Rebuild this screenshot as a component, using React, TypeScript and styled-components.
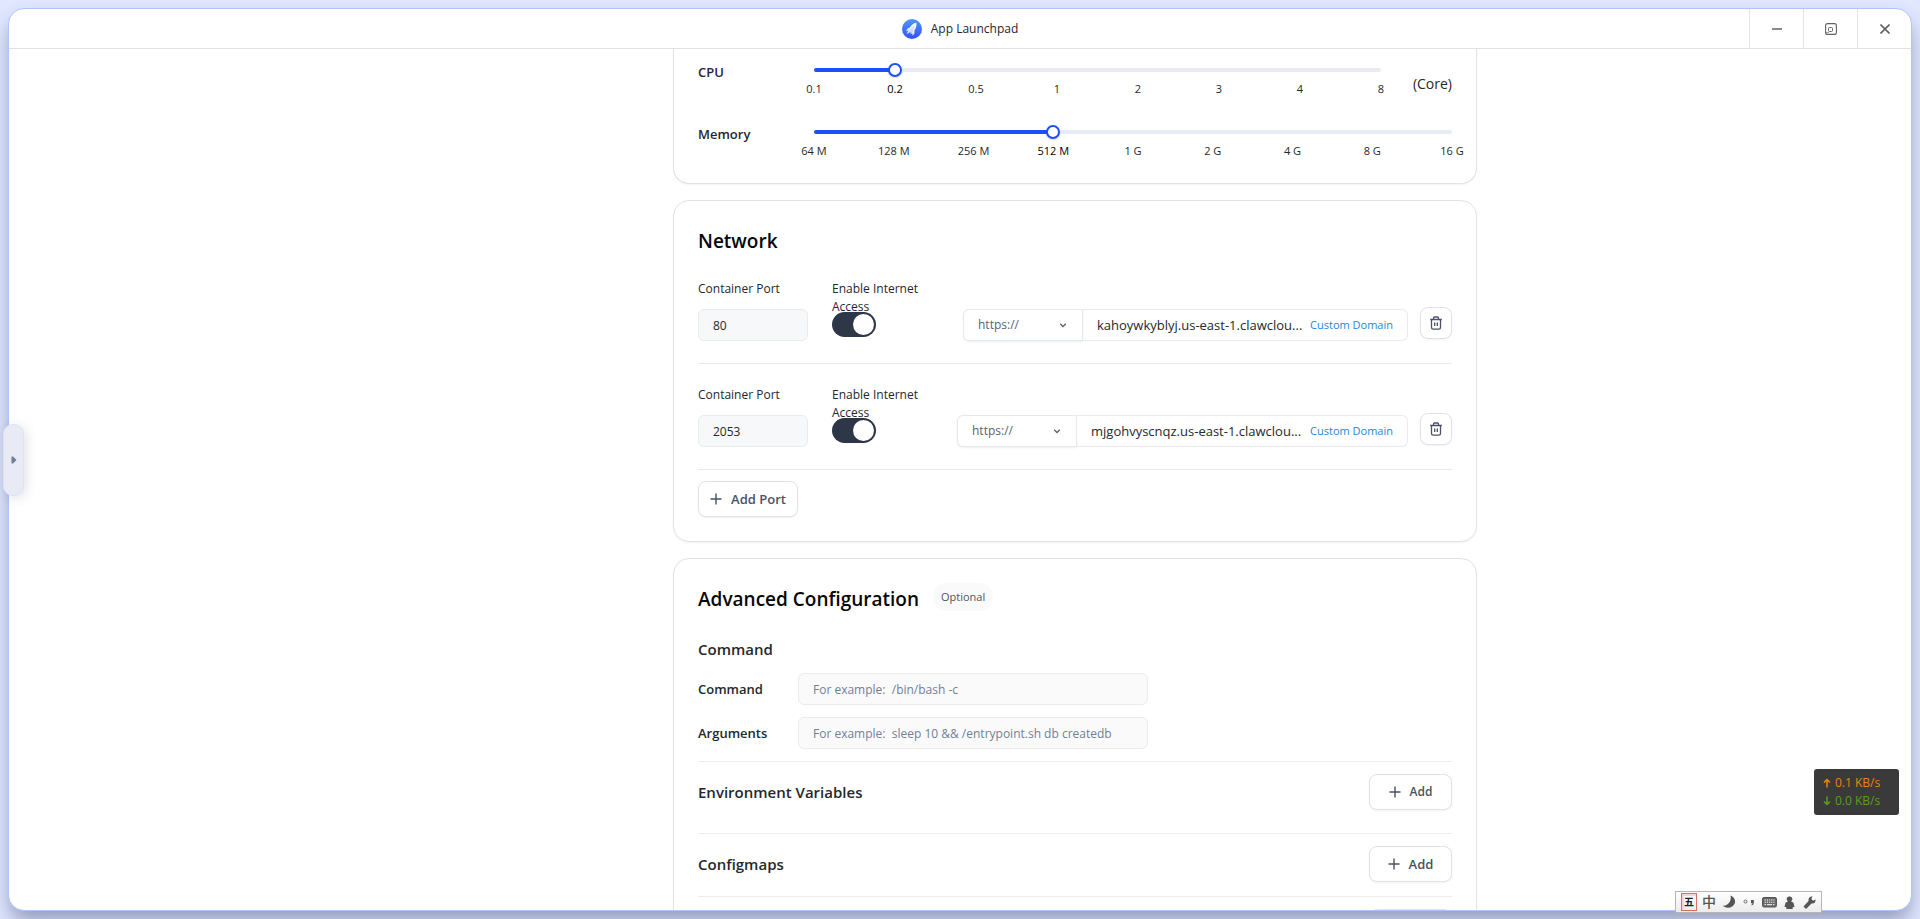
import React, { useState } from "react";
import styled, { createGlobalStyle } from "styled-components";

const GlobalStyle = createGlobalStyle`
  *, *::before, *::after { box-sizing: border-box; }
  body {
    margin: 0;
    background: #e0e7ff;
    color: #24282c;
    font-family: "Open Sans", "Noto Sans", "Noto Sans CJK SC", sans-serif;
    font-size: 14px;
    line-height: 20px;
    overflow: hidden;
  }
  button, input, select { font: inherit; color: inherit; margin: 0; }
  h1, h2, h3, p { margin: 0; font-weight: 600; }
`;

const Desktop = styled.div`
  display: flex;
  height: 100vh;
  padding: 8px;
`;

const AppWindow = styled.section`
  flex: 1;
  min-width: 0;
  display: flex;
  flex-direction: column;
  overflow: hidden;
  background: #fff;
  border: 1px solid #a9c6ff;
  border-radius: 16px;
  box-shadow: 0 12px 20px -2px rgba(50, 65, 105, 0.45);
`;

const TitleBar = styled.header`
  flex: none;
  display: grid;
  grid-template-columns: 1fr auto 1fr;
  height: 40px;
  border-bottom: 1px solid #dfe1e3;
`;

const AppName = styled.h1`
  grid-column: 2;
  display: flex;
  align-items: center;
  gap: 9px;
  font-size: 12px;
  font-weight: 400;
`;

const WindowControls = styled.div`
  display: flex;
  justify-content: flex-end;
`;

const WindowButton = styled.button`
  display: flex;
  align-items: center;
  justify-content: center;
  width: 54px;
  padding: 0;
  border: 0;
  border-left: 1px solid #e2e4e6;
  background: none;
  color: #5f6266;
`;

const Page = styled.main`
  flex: 1;
  min-height: 0;
  overflow: hidden;
  padding-left: 230px;
`;

const Column = styled.div`
  display: flex;
  flex-direction: column;
  gap: 16px;
  max-width: 804px;
  margin: 0 auto;
`;

const Card = styled.section<{ $continued?: boolean }>`
  padding: ${(p) => (p.$continued ? "10px 24px 0" : "24px")};
  border: 1px solid #e1e2e4;
  border-top-width: ${(p) => (p.$continued ? 0 : 1)}px;
  border-radius: ${(p) => (p.$continued ? "0 0 16px 16px" : "16px")};
  box-shadow: 0 1px 2px rgba(19, 51, 107, 0.06);
`;

const SliderRow = styled.div`
  display: flex;
  height: 62px;
`;

const SliderLabel = styled.label`
  width: 116px;
  padding-top: 3px;
  font-size: 13px;
  font-weight: 600;
`;

const SliderBody = styled.div`
  flex: 1;
  padding-top: 9px;
`;

const Track = styled.div`
  position: relative;
  height: 4px;
  border-radius: 2px;
  background: #e8ebf3;
`;

const TrackFill = styled.div`
  height: 4px;
  border-radius: 2px;
  background: #1d4ff7;
`;

const Range = styled.input`
  position: absolute;
  top: -5px;
  left: -7px;
  width: calc(100% + 14px);
  height: 14px;
  appearance: none;
  background: transparent;
  &::-webkit-slider-thumb {
    appearance: none;
    width: 14px;
    height: 14px;
    border: 2px solid #1d4ff7;
    border-radius: 50%;
    background: #fff;
    box-shadow: 0 1px 2px rgba(0, 0, 0, 0.15);
  }
`;

const Ticks = styled.div`
  display: flex;
  justify-content: space-between;
  margin-top: 8px;
`;

const Tick = styled.span<{ $active: boolean }>`
  display: flex;
  justify-content: center;
  width: 0;
  white-space: nowrap;
  font-size: 11px;
  line-height: 18px;
  color: ${(p) => (p.$active ? "#000" : "#24282c")};
`;

const Unit = styled.span`
  width: 71px;
  padding-top: 15px;
  text-align: right;
`;

const CardHeading = styled.div`
  display: flex;
  align-items: flex-start;
  gap: 14px;
  h2 {
    font-size: 19px;
    line-height: 33px;
    color: #060708;
  }
`;

const Badge = styled.span`
  padding: 0 8px;
  border-radius: 14px;
  background: #fafafa;
  color: #52565b;
  font-size: 11px;
  line-height: 28px;
`;

const PortRow = styled.div`
  display: flex;
  align-items: flex-start;
  padding: 22px 0;
  border-bottom: 1px solid #e8e9ea;
`;

const PortField = styled.div`
  width: 110px;
  margin-right: 24px;
`;

const FieldLabel = styled.label`
  display: block;
  height: 18px;
  font-size: 12px;
  line-height: 18px;
`;

const AccessField = styled.div`
  width: 94px;
`;

const PortInput = styled.input`
  display: block;
  width: 100%;
  height: 32px;
  margin-top: 11px;
  padding: 0 14px;
  border: 1px solid #e8ebf0;
  border-radius: 6px;
  background: #f7f8fa;
  font-size: 12px;
`;

const Switch = styled.input`
  appearance: none;
  display: block;
  width: 44px;
  height: 25px;
  margin-top: 14px;
  padding: 2px;
  border-radius: 13px;
  background: #2d3748;
  &::before {
    content: "";
    display: block;
    width: 21px;
    height: 21px;
    border-radius: 50%;
    background: #fff;
  }
  &:checked::before { margin-left: auto; }
`;

const Address = styled.div<{ $width: number }>`
  display: flex;
  width: ${(p) => p.$width}px;
  height: 32px;
  margin: 29px 12px 0 auto;
`;

const SchemeBox = styled.div`
  position: relative;
  width: 120px;
  color: #5a6376;
  svg {
    position: absolute;
    top: 10px;
    right: 14px;
    pointer-events: none;
  }
`;

const Scheme = styled.select`
  appearance: none;
  width: 100%;
  height: 32px;
  padding: 0 14px;
  border: 1px solid #e5e8ee;
  border-radius: 6px 0 0 6px;
  background: #fff;
  box-shadow: 0 1px 2px rgba(19, 51, 107, 0.08);
  font-size: 12px;
`;

const Domain = styled.div`
  flex: 1;
  display: flex;
  align-items: center;
  justify-content: space-between;
  padding: 0 14px;
  border: 1px solid #e8ebf0;
  border-left: 0;
  border-radius: 0 6px 6px 0;
  white-space: nowrap;
  font-size: 13px;
`;

const DomainLink = styled.a`
  color: #1a86e0;
  font-size: 11px;
  text-decoration: none;
`;

const IconButton = styled.button`
  display: flex;
  align-items: center;
  justify-content: center;
  width: 32px;
  height: 32px;
  margin-top: 27px;
  padding: 0;
  border: 1px solid #dfe2ea;
  border-radius: 8px;
  background: #fff;
  box-shadow: 0 1px 2px rgba(19, 51, 107, 0.06);
  color: #485264;
`;

const AddButton = styled.button<{ $width: number; $small?: boolean }>`
  display: flex;
  align-items: center;
  justify-content: center;
  gap: 9px;
  width: ${(p) => p.$width}px;
  height: 36px;
  padding: 0;
  border: 1px solid #dfe2ea;
  border-radius: 8px;
  background: #fff;
  box-shadow: 0 1px 2px rgba(19, 51, 107, 0.06);
  color: #485264;
  font-size: ${(p) => (p.$small ? 12 : 13)}px;
  font-weight: 600;
`;

const PortFooter = styled.div`
  padding-top: 11px;
`;

const SectionTitle = styled.h3`
  font-size: 15px;
  line-height: 24px;
`;

const CommandForm = styled.div`
  display: flex;
  flex-direction: column;
  gap: 12px;
  padding: 21px 0 12px;
  border-bottom: 1px solid #ecedee;
`;

const CommandRow = styled.div`
  display: flex;
  align-items: center;
  label {
    width: 100px;
    font-size: 13px;
    font-weight: 600;
  }
`;

const CommandInput = styled.input`
  width: 350px;
  height: 32px;
  padding: 0 14px;
  border: 1px solid #e8ebf0;
  border-radius: 6px;
  background: #fafafa;
  font-size: 12px;
  &::placeholder { color: #718096; }
`;

const ConfigRow = styled.div<{ $bottom: number }>`
  display: flex;
  align-items: center;
  justify-content: space-between;
  padding: 12px 0 ${(p) => p.$bottom}px;
  border-bottom: 1px solid #ecedee;
`;

const DrawerHandle = styled.button`
  position: fixed;
  top: calc(50% - 36px);
  left: 3px;
  display: flex;
  align-items: center;
  justify-content: center;
  width: 21px;
  height: 72px;
  padding: 0;
  border: 1px solid #dfe3f0;
  border-radius: 10px;
  background: #e8ebf6;
  box-shadow: 2px 2px 12px rgba(60, 70, 100, 0.16);
  color: #6f7d95;
`;

const NetSpeed = styled.aside`
  position: fixed;
  right: 21px;
  bottom: 104px;
  width: 85px;
  padding: 5px 9px;
  border-radius: 3px;
  background: #3a3a3a;
  font-size: 12px;
  line-height: 18px;
  white-space: nowrap;
`;

const Speed = styled.p<{ $color: string }>`
  display: flex;
  align-items: center;
  gap: 4px;
  color: ${(p) => p.$color};
  font-weight: 400;
`;

const ImeBar = styled.div`
  position: fixed;
  right: 98px;
  bottom: 6px;
  display: grid;
  grid-template-columns: repeat(7, 20px);
  align-items: center;
  justify-items: center;
  height: 22px;
  padding: 0 2px 0 3px;
  border: 1px solid #b5b5b5;
  background: linear-gradient(#fff, #ececec);
  color: #555;
  font-size: 14px;
  line-height: 18px;
  font-weight: 500;
`;

const ImeMode = styled.span`
  width: 16px;
  height: 18px;
  border: 1px solid #d9705f;
  box-shadow: inset 2px 2px 0 #f6d6d0;
  color: #222;
  font-size: 10px;
  font-weight: 700;
  line-height: 16px;
  text-align: center;
`;

const RocketLogo = () => (
  <svg width="20" height="20" viewBox="0 0 20 20" aria-hidden="true">
    <defs>
      <linearGradient id="disc" x1="0" y1="0" x2="0" y2="1">
        <stop offset="0" stopColor="#4f97fb" />
        <stop offset="1" stopColor="#3350fb" />
      </linearGradient>
      <linearGradient id="hull" x1="1" y1="0" x2="0" y2="1">
        <stop offset="0" stopColor="#ffffff" />
        <stop offset="1" stopColor="#c3d4ff" />
      </linearGradient>
    </defs>
    <circle cx="10" cy="10" r="10" fill="url(#disc)" />
    <path
      d="M14.300 3.800C11.500 4.200 9.500 5.600 8 8.200L5.300 9.700 4 12.200 6.200 11.700 4.400 15.300 7.600 13.600 9 13.400 8.300 15.300 10.200 14.300 10.600 16.800 12.400 14.400 12.500 11.400C14.200 9 14.800 6.800 14.300 3.800Z"
      fill="url(#hull)"
    />
    <path d="M12.200 7.500 7.800 12.800M10.500 11.500 9.300 14" stroke="#a9bffb" strokeWidth="0.700" />
  </svg>
);

const MinimizeIcon = () => (
  <svg width="12" height="12" viewBox="0 0 12 12" aria-hidden="true">
    <path d="M1 6h10" stroke="currentColor" strokeWidth="1.600" />
  </svg>
);

const RestoreIcon = () => (
  <svg width="12" height="12" viewBox="0 0 12 12" fill="none" stroke="currentColor" aria-hidden="true">
    <rect x="0.600" y="0.600" width="10.800" height="10.800" rx="2" strokeWidth="1.100" />
    <rect x="3.500" y="4.500" width="4" height="4" rx="1" strokeWidth="1" />
    <path d="M1 9.500h3" strokeWidth="1" opacity="0.6" />
  </svg>
);

const CloseIcon = () => (
  <svg width="10" height="10" viewBox="0 0 10 10" aria-hidden="true">
    <path d="M0.500 0.500l9 9M9.500 0.500l-9 9" stroke="currentColor" strokeWidth="1.600" />
  </svg>
);

const ChevronIcon = () => (
  <svg width="12" height="12" viewBox="0 0 12 12" aria-hidden="true">
    <path d="M3.200 4.700 6 7.500l2.800-2.800" fill="none" stroke="currentColor" strokeWidth="1.300" />
  </svg>
);

const TrashIcon = () => (
  <svg width="14" height="14" viewBox="0 0 14 14" fill="none" stroke="currentColor" strokeWidth="1.300" aria-hidden="true">
    <path d="M1.200 3.500h11.600M4.500 3.300V2q0-1 1-1h3q1 0 1 1v1.300M2.500 3.500V11.500q0 1.700 1.700 1.700h5.600q1.700 0 1.700-1.700V3.500M5.700 6.500v3.500M8.300 6.500v3.500" />
  </svg>
);

const PlusIcon = () => (
  <svg width="12" height="12" viewBox="0 0 12 12" aria-hidden="true">
    <path d="M6 0.500v11M0.500 6h11" stroke="currentColor" strokeWidth="1.400" />
  </svg>
);

const ArrowIcon = ({ down }: { down?: boolean }) => (
  <svg width="8" height="10" viewBox="0 0 8 10" fill="none" stroke="currentColor" strokeWidth="1.500" aria-hidden="true">
    <path d={down ? "M4 0.500v8M1 5.500l3 3 3-3" : "M4 9.500v-8M1 4.500l3-3 3 3"} />
  </svg>
);

const MoonIcon = () => (
  <svg width="14" height="14" viewBox="0 0 14 14" aria-hidden="true">
    <path d="M8.500 0.500c3.500 1.300 5.300 4.500 4.300 7.700-1.400 4.300-7.500 6.300-12.300 2.600 4.500 0.500 9.500-4.300 8-10.300z" fill="#555" />
  </svg>
);

const PunctuationIcon = () => (
  <svg width="12" height="12" viewBox="0 0 12 12" aria-hidden="true">
    <circle cx="2.500" cy="5.500" r="1.500" fill="none" stroke="#666" />
    <path d="M8 4h2.800v3q0 2-2.300 2.600v-1q1-.4 1-1.400H8z" fill="#555" />
  </svg>
);

const KeyboardIcon = () => (
  <svg width="15" height="12" viewBox="0 0 15 12" aria-hidden="true">
    <rect x="0.500" y="1.500" width="14" height="9.500" rx="1.500" fill="#666" stroke="#555" />
    <path d="M2.500 4h10M2.500 6.200h10" stroke="#fff" strokeDasharray="1.300 0.900" />
    <path d="M2.500 8.700h1.500M5 8.700h5M11 8.700h1.500" stroke="#fff" />
  </svg>
);

const PersonIcon = () => (
  <svg width="11" height="13" viewBox="0 0 11 13" aria-hidden="true">
    <path d="M5.500 0.500a2.500 2.500 0 0 1 1.500 4.700l2.500 1.500 1 4.300H8.700V13H2.300v-2H0.500l1-4.300L4 5.200A2.500 2.500 0 0 1 5.500 0.500z" fill="#555" />
  </svg>
);

const WrenchIcon = () => (
  <svg width="13" height="13" viewBox="0 0 13 13" aria-hidden="true">
    <path d="M9.500 0.500 8.300 3l1.700 1.700 2.500-1.200c.5 2.500-1.500 4.500-4 4L3 13 .5 10.500 5.600 5C5 2.500 7 .3 9.500.5z" fill="#555" />
  </svg>
);

interface ResourceSliderProps {
  id: string;
  label: string;
  marks: string[];
  initial: number;
  unit?: string;
}

const ResourceSlider = ({ id, label, marks, initial, unit }: ResourceSliderProps) => {
  const [value, setValue] = useState(initial);
  const last = marks.length - 1;
  return (
    <SliderRow>
      <SliderLabel htmlFor={id}>{label}</SliderLabel>
      <SliderBody>
        <Track>
          <TrackFill style={{ width: `${(value / last) * 100}%` }} />
          <Range
            id={id}
            type="range"
            min={0}
            max={last}
            value={value}
            onChange={(e) => setValue(Number(e.target.value))}
          />
        </Track>
        <Ticks>
          {marks.map((mark, i) => (
            <Tick key={mark} $active={i === value}>{mark}</Tick>
          ))}
        </Ticks>
      </SliderBody>
      {unit && <Unit>{unit}</Unit>}
    </SliderRow>
  );
};

const ports = [
  { port: "80", domain: "kahoywkyblyj.us-east-1.clawclou...", width: 445 },
  { port: "2053", domain: "mjgohvyscnqz.us-east-1.clawclou...", width: 451 },
];

export default function App() {
  return (
    <>
      <GlobalStyle />
      <Desktop>
        <AppWindow>
          <TitleBar>
            <AppName>
              <RocketLogo />
              App Launchpad
            </AppName>
            <WindowControls>
              <WindowButton type="button"><MinimizeIcon /></WindowButton>
              <WindowButton type="button"><RestoreIcon /></WindowButton>
              <WindowButton type="button"><CloseIcon /></WindowButton>
            </WindowControls>
          </TitleBar>
          <Page>
            <Column>
              <Card $continued>
                <ResourceSlider id="cpu" label="CPU" marks={["0.1", "0.2", "0.5", "1", "2", "3", "4", "8"]} initial={1} unit="(Core)" />
                <ResourceSlider
                  id="memory"
                  label="Memory"
                  marks={["64 M", "128 M", "256 M", "512 M", "1 G", "2 G", "4 G", "8 G", "16 G"]}
                  initial={3}
                />
              </Card>

              <Card>
                <CardHeading><h2>Network</h2></CardHeading>
                {ports.map(({ port, domain, width }) => (
                  <PortRow key={port}>
                    <PortField>
                      <FieldLabel htmlFor={`port-${port}`}>Container Port</FieldLabel>
                      <PortInput id={`port-${port}`} defaultValue={port} />
                    </PortField>
                    <AccessField>
                      <FieldLabel htmlFor={`access-${port}`}>Enable Internet Access</FieldLabel>
                      <Switch id={`access-${port}`} type="checkbox" defaultChecked />
                    </AccessField>
                    <Address $width={width}>
                      <SchemeBox>
                        <Scheme><option>https://</option></Scheme>
                        <ChevronIcon />
                      </SchemeBox>
                      <Domain>
                        <span>{domain}</span>
                        <DomainLink href="#domain">Custom Domain</DomainLink>
                      </Domain>
                    </Address>
                    <IconButton type="button"><TrashIcon /></IconButton>
                  </PortRow>
                ))}
                <PortFooter>
                  <AddButton type="button" $width={100}><PlusIcon />Add Port</AddButton>
                </PortFooter>
              </Card>

              <Card>
                <CardHeading>
                  <h2>Advanced Configuration</h2>
                  <Badge>Optional</Badge>
                </CardHeading>
                <CommandForm>
                  <SectionTitle>Command</SectionTitle>
                  <CommandRow>
                    <label htmlFor="command">Command</label>
                    <CommandInput id="command" placeholder="For example:&nbsp; /bin/bash -c" />
                  </CommandRow>
                  <CommandRow>
                    <label htmlFor="arguments">Arguments</label>
                    <CommandInput id="arguments" placeholder="For example:&nbsp; sleep 10 &amp;&amp; /entrypoint.sh db createdb" />
                  </CommandRow>
                </CommandForm>
                <ConfigRow $bottom={23}>
                  <SectionTitle>Environment Variables</SectionTitle>
                  <AddButton type="button" $width={83} $small><PlusIcon />Add</AddButton>
                </ConfigRow>
                <ConfigRow $bottom={14}>
                  <SectionTitle>Configmaps</SectionTitle>
                  <AddButton type="button" $width={83}><PlusIcon />Add</AddButton>
                </ConfigRow>
                <ConfigRow $bottom={14}>
                  <span />
                  <AddButton type="button" $width={83}><PlusIcon /></AddButton>
                </ConfigRow>
              </Card>
            </Column>
          </Page>
        </AppWindow>
      </Desktop>

      <DrawerHandle type="button">
        <svg width="6" height="8" viewBox="0 0 6 8" aria-hidden="true">
          <path d="M0.500 0.500h1.500L5.500 4 2 7.500H0.500z" fill="currentColor" />
        </svg>
      </DrawerHandle>

      <NetSpeed>
        <Speed $color="#e8870c"><ArrowIcon />0.1 KB/s</Speed>
        <Speed $color="#5a9e1c"><ArrowIcon down />0.0 KB/s</Speed>
      </NetSpeed>

      <ImeBar>
        <ImeMode>五</ImeMode>
        <span>中</span>
        <MoonIcon />
        <PunctuationIcon />
        <KeyboardIcon />
        <PersonIcon />
        <WrenchIcon />
      </ImeBar>
    </>
  );
}
